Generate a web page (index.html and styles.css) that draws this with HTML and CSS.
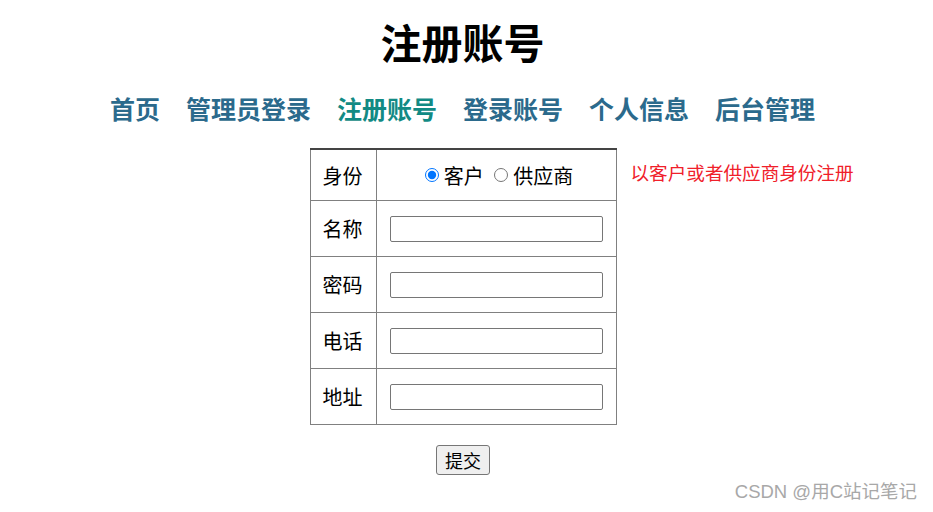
FILE: index.html
```html
<!DOCTYPE html>
<html lang="zh">
<head>
<meta charset="utf-8">
<title>注册账号</title>
<link rel="stylesheet" href="styles.css">
</head>
<body>
<h1 class="title">注册账号</h1>
<nav class="nav">
  <a class="nav-item" href="#">首页</a>
  <a class="nav-item" href="#">管理员登录</a>
  <a class="nav-item active" href="#">注册账号</a>
  <a class="nav-item" href="#">登录账号</a>
  <a class="nav-item" href="#">个人信息</a>
  <a class="nav-item" href="#">后台管理</a>
</nav>
<form class="form">
  <div class="form-grid">
    <div class="side"></div>
    <table class="reg-table">
      <tr class="row-first">
        <td class="label">身份</td>
        <td class="field center">
          <label class="radio"><input type="radio" name="role" checked>客户</label>
          <label class="radio"><input type="radio" name="role">供应商</label>
        </td>
      </tr>
      <tr class="row">
        <td class="label">名称</td>
        <td class="field"><input class="text-input" type="text"></td>
      </tr>
      <tr class="row">
        <td class="label">密码</td>
        <td class="field"><input class="text-input" type="password"></td>
      </tr>
      <tr class="row">
        <td class="label">电话</td>
        <td class="field"><input class="text-input" type="text"></td>
      </tr>
      <tr class="row">
        <td class="label">地址</td>
        <td class="field"><input class="text-input" type="text"></td>
      </tr>
    </table>
    <div class="side"><p class="note">以客户或者供应商身份注册</p></div>
  </div>
  <div class="actions"><button class="submit" type="button">提交</button></div>
</form>
<div class="watermark">CSDN @用C站记笔记</div>
</body>
</html>
```

FILE: styles.css
```css
html, body {
  margin: 0;
  padding: 0;
  background: #ffffff;
}
body {
  margin: 8px;
  font-family: "Noto Sans CJK SC", "Liberation Sans", sans-serif;
  color: #000;
}
.title {
  margin: 9px 0 0;
  font-size: 41px;
  line-height: 48px;
  font-weight: bold;
  text-align: center;
  padding-right: 8px;
}
.nav {
  margin-top: 27px;
  display: flex;
  justify-content: center;
  gap: 26px;
  padding-right: 8px;
}
.nav-item {
  font-size: 25px;
  line-height: 32px;
  font-weight: bold;
  color: #2b6a8c;
  text-decoration: none;
}
.nav-item.active {
  color: #128a84;
}
.form {
  margin-top: 24px;
}
.form-grid {
  display: grid;
  grid-template-columns: 1fr auto 1fr;
  padding-right: 7px;
}
.reg-table {
  border-collapse: collapse;
  border: 1px solid #808080;
  border-top: 2px solid #444;
}
.reg-table td {
  border: 1px solid #808080;
  padding: 0 13px;
  font-size: 20px;
  vertical-align: middle;
}
.row-first td {
  border-top: 2px solid #444;
  height: 50px;
}
.row td {
  height: 55px;
}
.label {
  text-align: center;
}
.reg-table td.label {
  padding: 0 13px 0 12px;
}
.center {
  text-align: center;
}
.radio {
  font-size: 20px;
}
.radio input {
  width: 14px;
  height: 14px;
  margin: 0 5px 0 6px;
  vertical-align: 2px;
}
.text-input {
  display: block;
  box-sizing: border-box;
  width: 213px;
  height: 26px;
  border: 1px solid #767676;
  border-radius: 2px;
  padding: 1px 2px;
}
.note {
  margin: 12px 0 0 14px;
  color: #f0202a;
  font-size: 18.6px;
  line-height: 24px;
  white-space: nowrap;
}
.actions {
  display: flex;
  justify-content: center;
  margin-top: 20px;
  padding-right: 7px;
}
.submit {
  font-family: "Noto Sans CJK SC", sans-serif;
  font-size: 18px;
  line-height: 20px;
  height: 30px;
  width: 54px;
  padding: 0;
  background: #efefef;
  border: 1px solid #767676;
  border-radius: 3px;
  color: #000;
}
.watermark {
  position: absolute;
  right: 16px;
  top: 480px;
  font-family: "Liberation Sans", "Noto Sans CJK SC", sans-serif;
  font-size: 18.5px;
  line-height: 24px;
  color: #a8a8a8;
}
```
